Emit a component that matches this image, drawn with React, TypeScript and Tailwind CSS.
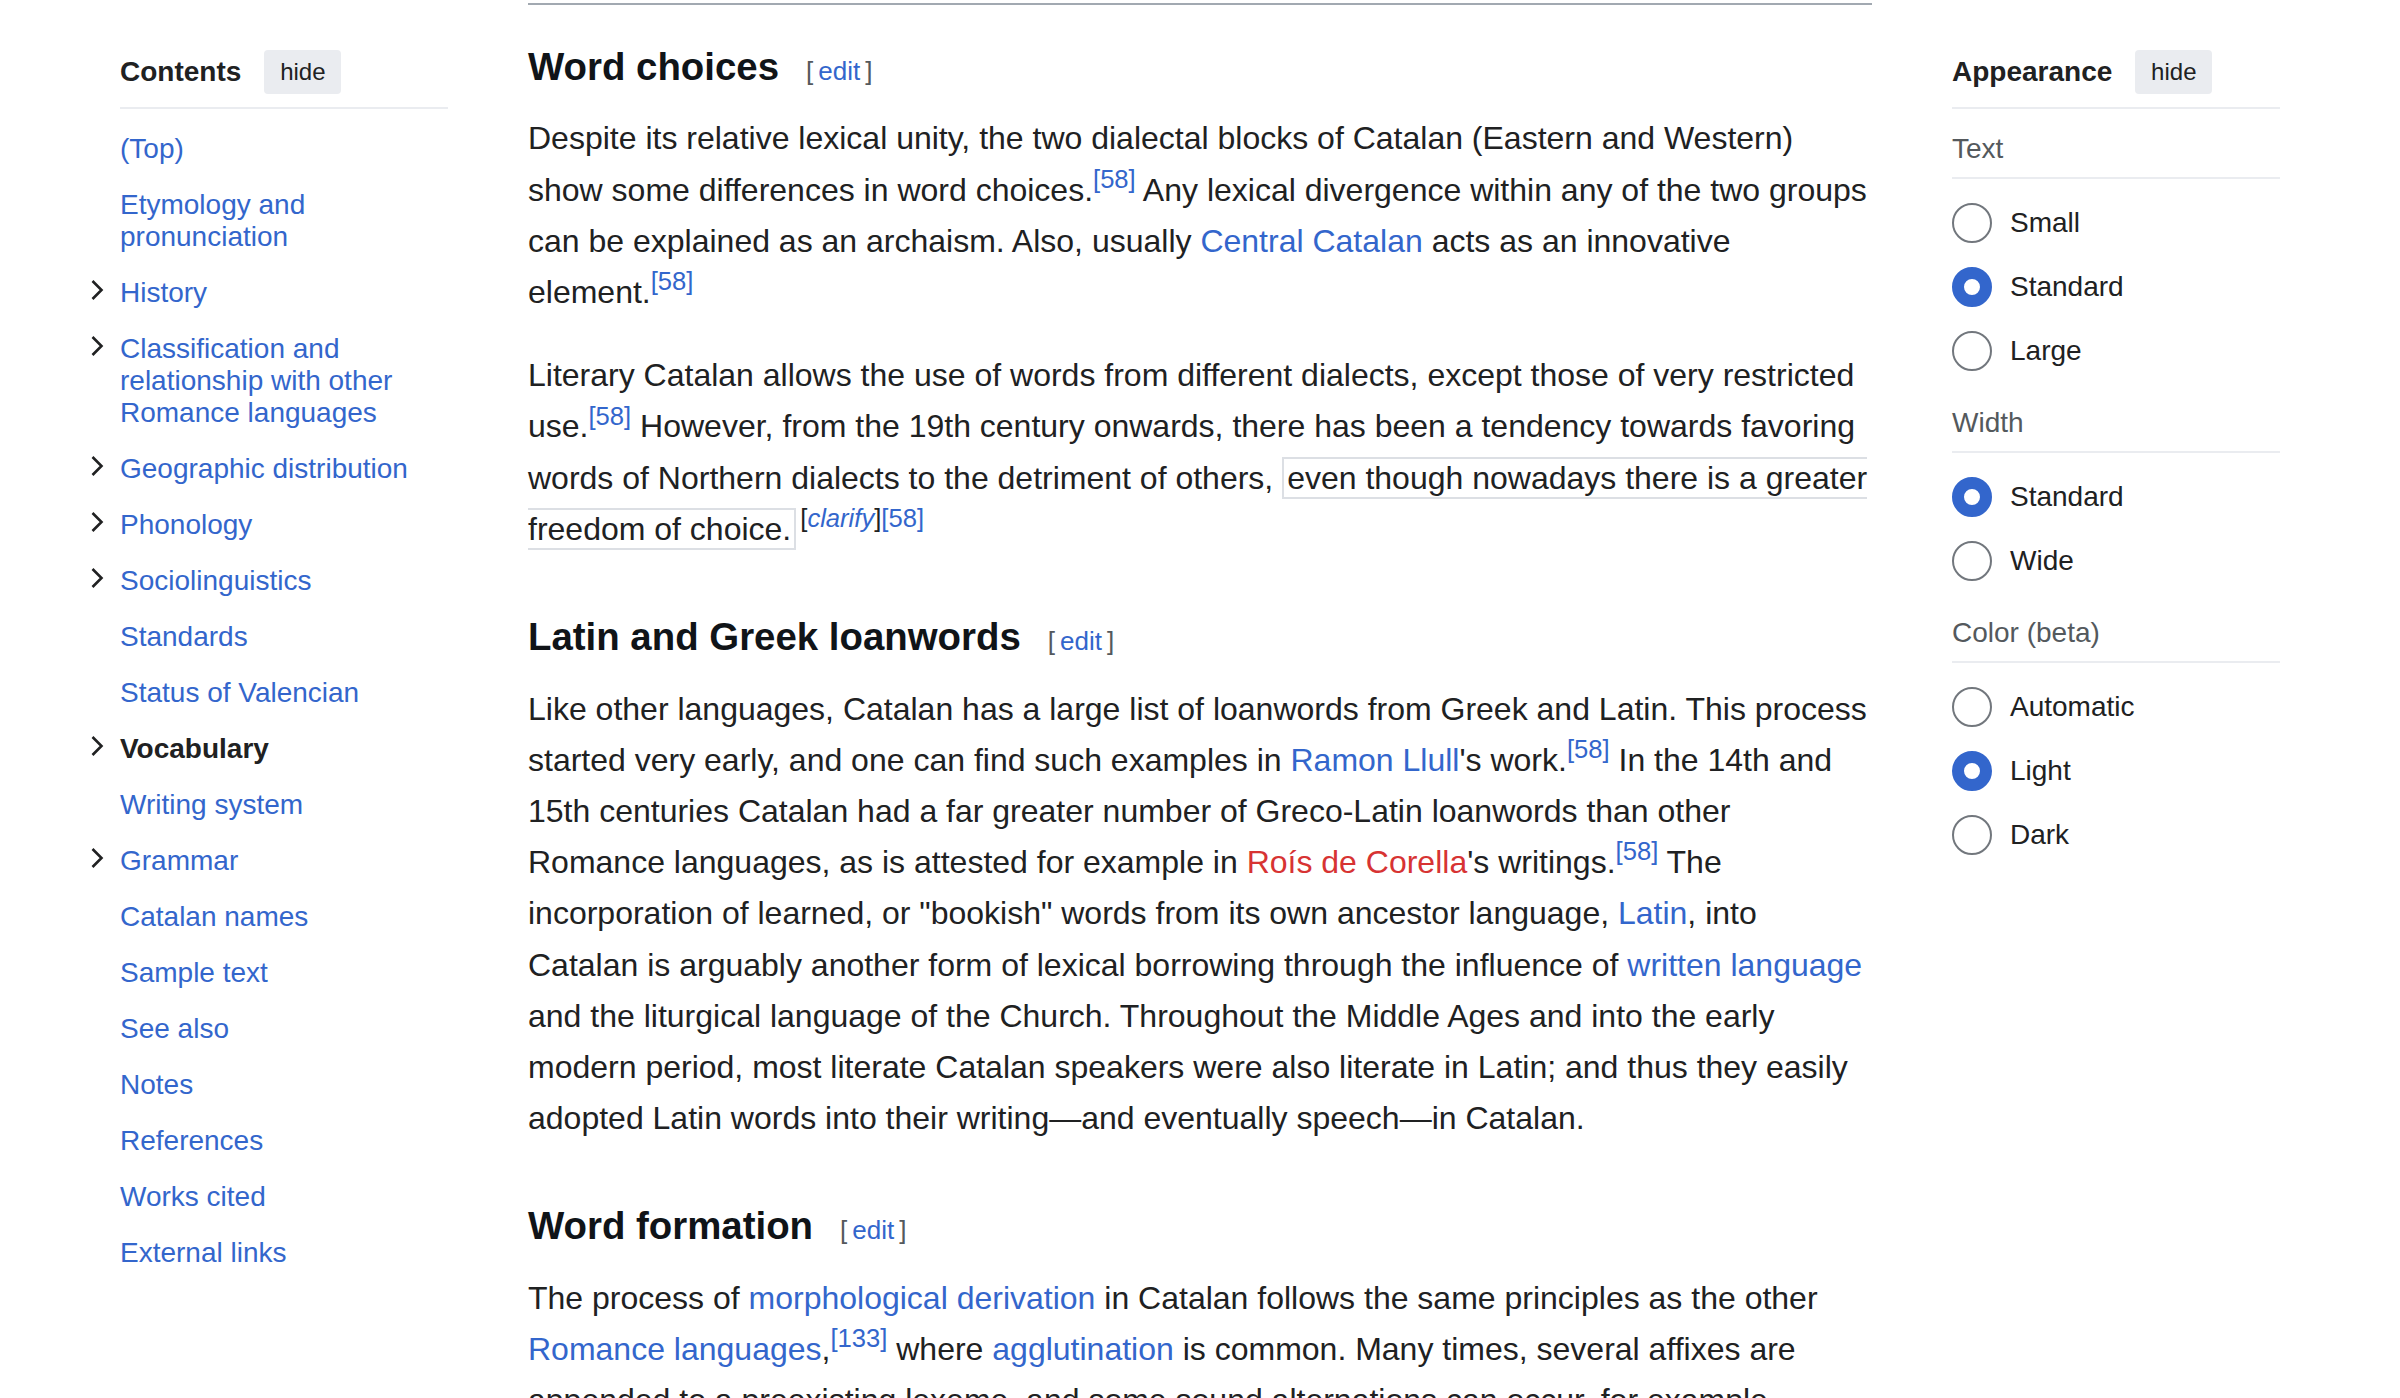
import React from 'react';

const toc = [
  { label: '(Top)', chevron: false },
  { label: 'Etymology and pronunciation', chevron: false },
  { label: 'History', chevron: true },
  { label: 'Classification and relationship with other Romance languages', chevron: true },
  { label: 'Geographic distribution', chevron: true },
  { label: 'Phonology', chevron: true },
  { label: 'Sociolinguistics', chevron: true },
  { label: 'Standards', chevron: false },
  { label: 'Status of Valencian', chevron: false },
  { label: 'Vocabulary', chevron: true, active: true },
  { label: 'Writing system', chevron: false },
  { label: 'Grammar', chevron: true },
  { label: 'Catalan names', chevron: false },
  { label: 'Sample text', chevron: false },
  { label: 'See also', chevron: false },
  { label: 'Notes', chevron: false },
  { label: 'References', chevron: false },
  { label: 'Works cited', chevron: false },
  { label: 'External links', chevron: false },
];

const appearance = [
  { title: 'Text', options: ['Small', 'Standard', 'Large'], checked: 1 },
  { title: 'Width', options: ['Standard', 'Wide'], checked: 0 },
  { title: 'Color (beta)', options: ['Automatic', 'Light', 'Dark'], checked: 1 },
];

function Chevron() {
  return (
    <svg width="14" height="22" viewBox="0 0 14 22" className="mt-[2px] ml-[2px]">
      <polyline points="2.5,2 11.5,11 2.5,20" fill="none" stroke="#202122" strokeWidth="2.6" />
    </svg>
  );
}

function SideHeader({ title }: { title: string }) {
  return (
    <div className="flex items-center gap-[23px] pt-[50px] pb-[13px] border-b-2 border-[#eaecf0]">
      <div className="text-[28px] font-bold text-[#202122] leading-[44px]">{title}</div>
      <button className="w-[77px] h-[44px] rounded-[4px] bg-[#eaecf0] text-[24px] text-[#202122] leading-none">
        hide
      </button>
    </div>
  );
}

// word + reference kept on one line, like sup.reference on the wiki
function Cite({ word, n }: { word: string; n: string }) {
  return (
    <span className="whitespace-nowrap">
      {word}
      <sup className="text-[25.6px] text-[#3366cc]">[{n}]</sup>
    </span>
  );
}

function A({ children, red }: { children: React.ReactNode; red?: boolean }) {
  return <a className={red ? 'text-[#d73333]' : 'text-[#3366cc]'}>{children}</a>;
}

function Heading({ children, first }: { children: string; first?: boolean }) {
  return (
    <div className={first ? 'mt-[31px]' : 'mt-[51px]'}>
      <h3 className="inline text-[38.4px] leading-[61.44px] font-bold text-[#101418]">{children}</h3>
      <span className="ml-[27px] text-[26px] text-[#54595d]">
        [<a className="mx-[5px] text-[#3366cc]">edit</a>]
      </span>
    </div>
  );
}

export default function App() {
  return (
    <div className="h-[1398px] overflow-hidden bg-white font-['Liberation_Sans',Arial,sans-serif] text-[#202122]">
      <div className="flex gap-[80px] px-[120px]">
        {/* left: contents */}
        <div className="w-[328px] shrink-0">
          <SideHeader title="Contents" />
          <div className="pt-[12px]">
            {toc.map((item) => (
              <div key={item.label} className="flex -ml-[32px] py-[12px]">
                <div className="w-[32px] shrink-0">{item.chevron && <Chevron />}</div>
                <div
                  className={
                    'text-[28px] leading-[32px] ' +
                    (item.active ? 'font-bold text-[#202122]' : 'text-[#3366cc]')
                  }
                >
                  {item.label}
                </div>
              </div>
            ))}
          </div>
        </div>

        {/* main article */}
        <div className="flex-1 min-w-0">
          <div className="mt-[3px] h-[2px] bg-[#a2a9b1]" />
          <Heading first>Word choices</Heading>
          <div className="text-[32px] leading-[51.2px] text-[#202122]">
            <p className="mt-[16px]">
              Despite its relative lexical unity, the two dialectal blocks of Catalan (Eastern and Western) show
              some differences in word <Cite word="choices." n="58" /> Any lexical divergence within any of the two
              groups can be explained as an archaism. Also, usually <A>Central Catalan</A> acts as an innovative{' '}
              <Cite word="element." n="58" />
            </p>
            <p className="mt-[32px]">
              Literary Catalan allows the use of words from different dialects, except those of very restricted{' '}
              <Cite word="use." n="58" /> However, from the 19th century onwards, there has been a tendency towards
              favoring words of Northern dialects to the detriment of others,{' '}
              <span className="border-2 border-[#dcdfe4] px-[3px] py-[1px]">
                even though nowadays there is a greater freedom of choice.
              </span>
              <sup className="ml-[4px] text-[25.6px]">
                [<i className="text-[#3366cc]">clarify</i>]<span className="text-[#3366cc]">[58]</span>
              </sup>
            </p>
          </div>

          <Heading>Latin and Greek loanwords</Heading>
          <div className="text-[32px] leading-[51.2px] text-[#202122]">
            <p className="mt-[16px]">
              Like other languages, Catalan has a large list of loanwords from Greek and Latin. This process
              started very early, and one can find such examples in <A>Ramon Llull</A>
              <Cite word="'s work." n="58" /> In the 14th and 15th centuries Catalan had a far greater number of
              Greco-Latin loanwords than other Romance languages, as is attested for example in{' '}
              <A red>Roís de Corella</A>'s <Cite word="writings." n="58" /> The incorporation of learned, or
              "bookish" words from its own ancestor language, <A>Latin</A>, into Catalan is arguably another form
              of lexical borrowing through the influence of <A>written language</A> and the liturgical language of
              the Church. Throughout the Middle Ages and into the early modern period, most literate Catalan
              speakers were also literate in Latin; and thus they easily adopted Latin words into their
              writing—and eventually speech—in Catalan.
            </p>
          </div>

          <Heading>Word formation</Heading>
          <div className="text-[32px] leading-[51.2px] text-[#202122]">
            <p className="mt-[16px]">
              The process of <A>morphological derivation</A> in Catalan follows the same principles as the other{' '}
              <span className="whitespace-nowrap">
                <A>Romance languages</A>,<sup className="text-[25.6px] text-[#3366cc]">[133]</sup>
              </span>{' '}
              where <A>agglutination</A> is common. Many times, several affixes are appended to a preexisting
              lexeme, and some sound alternations can occur, for example elèctric [əˈlɛktrik] ("electrical") vs.
              electricitat [ələktrisiˈtat].
            </p>
          </div>
        </div>

        {/* right: appearance */}
        <div className="w-[328px] shrink-0">
          <SideHeader title="Appearance" />
          {appearance.map((group) => (
            <div key={group.title} className="mt-[24px]">
              <div className="pb-[12px] border-b-2 border-[#eaecf0] text-[28px] leading-[32px] text-[#54595d]">
                {group.title}
              </div>
              <div className="mt-[12px]">
                {group.options.map((opt, idx) => (
                  <div key={opt} className="flex items-center h-[64px] gap-[18px]">
                    <div
                      className={
                        'w-[40px] h-[40px] rounded-full bg-white shrink-0 ' +
                        (idx === group.checked
                          ? 'border-[12px] border-[#3366cc]'
                          : 'border-2 border-[#72777d]')
                      }
                    />
                    <div className="text-[28px] text-[#202122]">{opt}</div>
                  </div>
                ))}
              </div>
            </div>
          ))}
        </div>
      </div>
    </div>
  );
}
